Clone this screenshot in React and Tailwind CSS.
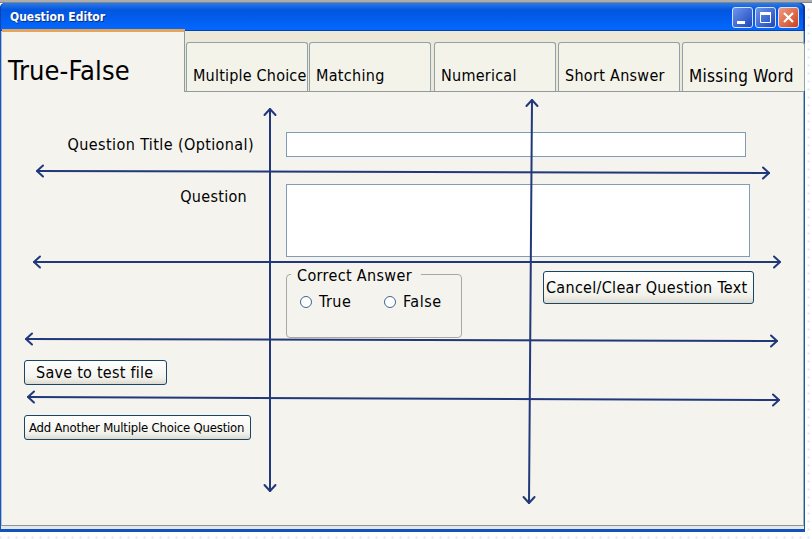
import React from "react";

const FONT = "font-['DejaVu_Sans_Condensed','DejaVu_Sans',sans-serif] [font-stretch:condensed]";

const TABS = [
  { label: "Multiple Choice", box: "w-[122px]", text: "text-[16px] tracking-[0.2px]" },
  { label: "Matching", box: "w-[122px] ml-px", text: "text-[16px] tracking-[0.3px]" },
  { label: "Numerical", box: "w-[122px] ml-[3px]", text: "text-[16px] tracking-[0.25px]" },
  { label: "Short Answer", box: "w-[122px] ml-[2px]", text: "text-[16px] tracking-[0.3px]" },
  { label: "Missing Word", box: "w-[123px] ml-[2px]", text: "text-[17px] tracking-[0.3px]" },
];

const ARROWS = [
  { x1: 37, y1: 171, x2: 769, y2: 173 },
  { x1: 34, y1: 262, x2: 780, y2: 262 },
  { x1: 26, y1: 339, x2: 777, y2: 341 },
  { x1: 28, y1: 397, x2: 779, y2: 400 },
  { x1: 270, y1: 109, x2: 270, y2: 491 },
  { x1: 532, y1: 100, x2: 529, y2: 503 },
];

function Arrow({ x1, y1, x2, y2 }) {
  const angle = (Math.atan2(y2 - y1, x2 - x1) * 180) / Math.PI;
  const head = "M6 -5.5 L0 0 L6 5.5";
  return (
    <g fill="none" stroke="#21387a" strokeWidth="2" strokeLinecap="round" strokeLinejoin="round">
      <line x1={x1} y1={y1} x2={x2} y2={y2} />
      <path d={head} transform={`translate(${x1} ${y1}) rotate(${angle})`} />
      <path d={head} transform={`translate(${x2} ${y2}) rotate(${angle + 180})`} />
    </g>
  );
}

function CaptionButton({ tone, children }) {
  return (
    <div className={`h-[21px] w-[21px] rounded-[3px] border border-[#d5e2fa] ${tone}`}>
      <svg viewBox="0 0 19 19" className="block h-[19px] w-[19px]" fill="none" stroke="#fff">
        {children}
      </svg>
    </div>
  );
}

function PushButton({ className, children }) {
  return (
    <button
      className={`block whitespace-nowrap rounded-[3px] border border-[#1b4565] bg-linear-to-b from-white from-0% via-[#f2f2ed] via-75% to-[#dcd9cf] text-left text-black ${className}`}
    >
      {children}
    </button>
  );
}

function Radio({ label, className }) {
  return (
    <label className={`flex items-center ${className}`}>
      <span className="h-[12px] w-[12px] shrink-0 rounded-full border border-[#3f6690] bg-white" />
      <span className="ml-[7px] pt-px text-[16px] leading-5 tracking-[0.5px]">{label}</span>
    </label>
  );
}

export default function App() {
  return (
    <div
      className={`relative h-[539px] w-[812px] overflow-hidden bg-white bg-[radial-gradient(circle_at_4px_4px,#dde6ea_0.8px,transparent_1.2px)] bg-[length:8px_8px] bg-[position:-3.5px_-2.5px] text-black ${FONT}`}
    >
      <div className="h-[3px] border-b border-[#7d8590] bg-[#adadab]" />
      <div className="flex h-[529px] w-[805px] flex-col">
        <header className="flex h-[28px] shrink-0 items-center rounded-t-[5px] bg-linear-to-b from-[#2c7ae6] from-0% via-[#0355dd] via-25% to-[#0267ff] to-90% pl-[10px] pr-[6px] shadow-[inset_0_-1px_0_#0442ad,inset_1px_0_0_#0a44b5,inset_-2px_0_0_#0537a8]">
          <h1 className="text-[12px] font-bold leading-4 tracking-[0px] text-white [text-shadow:1px_1px_0_#0a2f80]">
            Question Editor
          </h1>
          <div className="ml-auto flex gap-[2px] pt-px">
            <CaptionButton tone="bg-linear-to-br from-[#6f95ee] to-[#1c45bb]">
              <path d="M4 14.5h8" strokeWidth="3" />
            </CaptionButton>
            <CaptionButton tone="bg-linear-to-br from-[#6f95ee] to-[#1c45bb]">
              <path d="M4 5.5h11" strokeWidth="3" />
              <path d="M4.5 5v9.5h10V5" />
            </CaptionButton>
            <CaptionButton tone="bg-linear-to-br from-[#ee9a80] to-[#cf3c15]">
              <path d="M5 5l9 9M14 5l-9 9" strokeWidth="2.2" />
            </CaptionButton>
          </div>
        </header>

        <div className="flex grow flex-col border-b-[3px] border-l border-r border-b-[#1252bd] border-l-[#1c54b4] border-r-[#1d55a5] bg-[#dfe9ee]">
          <div className="flex grow flex-col border-b border-l border-r border-b-[#8f968c] border-l-[#a9c2e4] border-r-[#9fb3bd] bg-[#f4f3ee]">
            <nav className="flex h-[61px] shrink-0 bg-[#ece9d8]">
              <div className="-mt-[2px] flex w-[183px] shrink-0 items-end border-r border-t-[3px] border-r-[#919b9c] border-t-[#e5a458] bg-[#f4f3ee] pb-[5px] pl-[6px] text-[27px] leading-8 tracking-[0.1px]">
                True-False
              </div>
              <div className="flex w-[618px] shrink-0 items-end border-b border-[#919b9c] pl-px">
                {TABS.map((t) => (
                  <div
                    key={t.label}
                    className={`flex h-[49px] shrink-0 items-end whitespace-nowrap rounded-t-[3px] border border-b-0 border-[#91a1aa] bg-[#f3f3ea] pb-[5px] pl-[6px] leading-5 ${t.box} ${t.text}`}
                  >
                    {t.label}
                  </div>
                ))}
              </div>
            </nav>

            <main className="flex grow flex-col">
              <div className="mt-[40px] flex h-[25px] items-center">
                <label className="w-[252px] whitespace-nowrap pt-px text-right text-[16px] tracking-[0.4px]">
                  Question Title (Optional)
                </label>
                <input className="ml-[32px] h-[25px] w-[460px] border border-[#7f9db9] bg-white" />
              </div>
              <div className="mt-[27px] flex h-[73px] items-start">
                <label className="w-[245px] pt-px text-right text-[16px] leading-6 tracking-[0.3px]">Question</label>
                <textarea className="ml-[39px] h-[73px] w-[464px] resize-none border border-[#7f9db9] bg-white" />
              </div>
              <div className="mt-[14px] flex items-start pl-[284px]">
                <section className="mt-[3px] h-[64px] w-[176px] rounded-[4px] border border-[#aaa99d]">
                  <h2 className="-mt-[9px] ml-[4px] w-[130px] whitespace-nowrap bg-[#f4f3ee] pl-[6px] text-[16px] leading-5 tracking-[0.35px]">
                    Correct Answer
                  </h2>
                  <div className="mt-[5px] flex pl-[13px]">
                    <Radio label="True" className="w-[84px]" />
                    <Radio label="False" className="w-[70px]" />
                  </div>
                </section>
                <PushButton className="ml-[81px] h-[33px] w-[211px] pl-[2px] pt-px text-[16px] tracking-[0.3px]">
                  Cancel/Clear Question Text
                </PushButton>
              </div>
              <PushButton className="ml-[22px] mt-[22px] h-[25px] w-[143px] pl-[11px] text-[16px] leading-[24px] tracking-[0.25px]">
                Save to test file
              </PushButton>
              <PushButton className="ml-[22px] mt-[30px] h-[25px] w-[227px] pl-[4px] text-[13px] leading-[23px] tracking-[-0.2px]">
                Add Another Multiple Choice Question
              </PushButton>
            </main>
          </div>
          <div className="h-[3px] shrink-0" />
        </div>
      </div>

      <svg className="pointer-events-none absolute inset-0 h-[539px] w-[812px]" viewBox="0 0 812 539">
        {ARROWS.map((a) => (
          <Arrow key={`${a.x1}-${a.y1}`} {...a} />
        ))}
      </svg>
    </div>
  );
}
